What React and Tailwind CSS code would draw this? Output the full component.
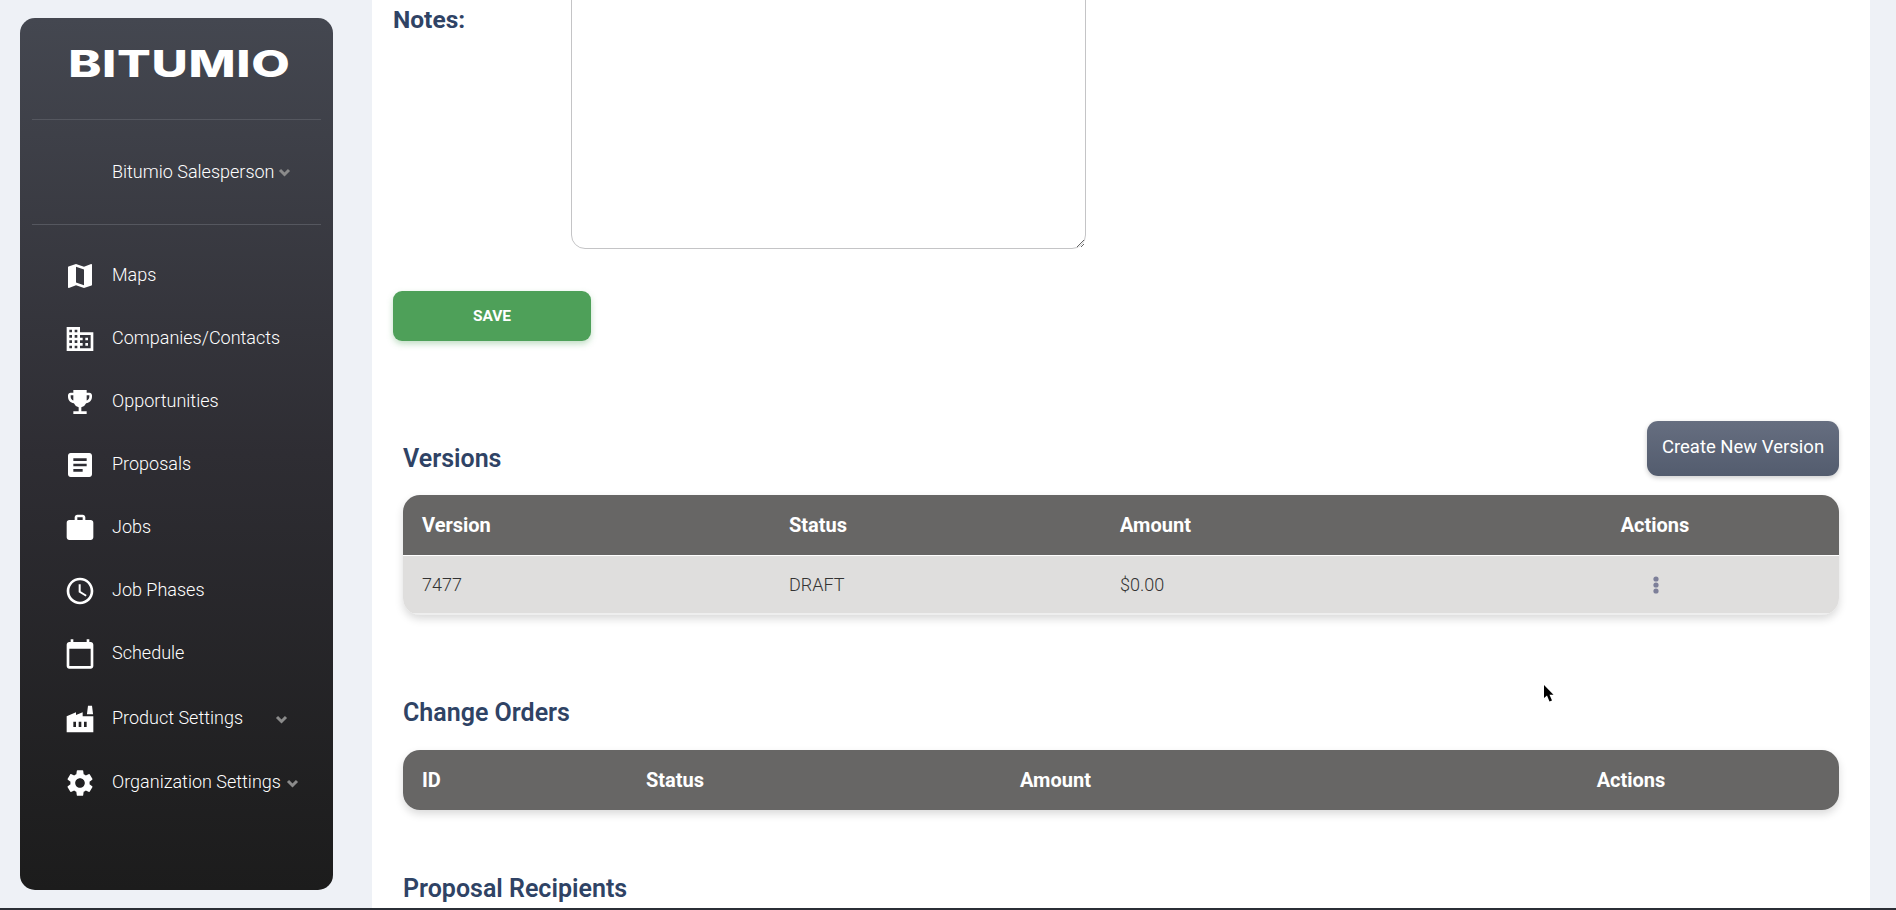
import React from 'react';
import { MdMap, MdBusiness, MdEmojiEvents, MdArticle, MdWork, MdAccessTime, MdCalendarToday, MdFactory, MdSettings } from 'react-icons/md';

const navItems = [
  { label: 'Maps', icon: MdMap },
  { label: 'Companies/Contacts', icon: MdBusiness },
  { label: 'Opportunities', icon: MdEmojiEvents },
  { label: 'Proposals', icon: MdArticle },
  { label: 'Jobs', icon: MdWork },
  { label: 'Job Phases', icon: MdAccessTime },
  { label: 'Schedule', icon: MdCalendarToday },
  { label: 'Product Settings', icon: MdFactory, chevron: 'ml-[32px]', gapTop: 'mt-[2px]' },
  { label: 'Organization Settings', icon: MdSettings, chevron: 'ml-[5px]', gapTop: 'mt-[1px]' },
];

const Chevron = ({ className = '' }) => (
  <svg width="13" height="9" viewBox="0 0 13 9" fill="none" className={className}>
    <path d="M2 2 L6.5 6.5 L11 2" stroke="#8b8b8b" strokeWidth="3" />
  </svg>
);

const Sidebar = () => (
  <aside className="w-[313px] h-[872px] shrink-0 rounded-[15px] bg-gradient-to-b from-[#444750] via-[#2e2d33] to-[#1c1c1c] px-[12px]">
    <div className="h-[101px] flex items-start justify-center pt-[24px] pl-[6px]">
      <span className="font-['Inter',sans-serif] font-extrabold text-[37px] leading-[44px] text-white tracking-[0.5px] scale-x-[1.35] origin-center">
        BITUMIO
      </span>
    </div>
    <div className="h-px bg-[#55575f]" />
    <div className="h-[104px] flex items-center pl-[80px] pb-[2px] font-['Roboto',sans-serif] font-light text-[18px] text-white">
      <span>Bitumio Salesperson</span>
      <Chevron className="ml-[3px] mt-[3px]" />
    </div>
    <div className="h-px bg-[#55575f]" />
    <nav className="pt-[19px] flex flex-col">
      {navItems.map((item) => (
        <div key={item.label} className={`h-[63px] flex items-center ${item.gapTop || ''}`}>
          <item.icon size={32} className="text-white ml-[32px] mr-[16px] shrink-0" />
          <span className="font-['Roboto',sans-serif] font-light text-[18px] leading-[24px] -mt-[2px] text-white">{item.label}</span>
          {item.chevron && <Chevron className={`${item.chevron} mt-[2px]`} />}
        </div>
      ))}
    </nav>
  </aside>
);

const SectionTitle = ({ children }) => (
  <h2 className="font-['Roboto',sans-serif] font-semibold text-[25px] leading-[30px] text-[#2f4365]">{children}</h2>
);

const HeaderRow = ({ columns, cells }) => (
  <div className={`grid ${columns} h-[60px] items-center bg-[#676665] font-['Roboto',sans-serif] font-bold text-[20px] text-white`}>
    {cells.map((cell, i) => (
      <div key={cell} className={i === cells.length - 1 ? 'text-center' : 'pl-[19px]'}>{cell}</div>
    ))}
  </div>
);

const Main = () => (
  <main className="w-[1498px] h-[908px] shrink-0 bg-white pl-[21px] pr-[31px] overflow-hidden">
    <div className="flex items-start">
      <div className="w-[178px] pt-[5px] font-['Roboto',sans-serif] font-bold text-[24.5px] leading-[30px] text-[#2f4365]">Notes:</div>
      <textarea className="w-[515px] h-[269px] -mt-[20px] rounded-[14px] border border-[#c4c4c6] bg-white" />
    </div>

    <button className="block mt-[42px] w-[198px] h-[50px] pt-[1px] rounded-[9px] bg-[#4ea059] shadow-[0_3px_6px_rgba(76,160,89,0.35)] font-['Roboto',sans-serif] font-bold text-[15.5px] text-white">
      SAVE
    </button>

    <div className="ml-[10px] mt-[80px]">
      <div className="flex items-start justify-between">
        <div className="pt-[23px]">
          <SectionTitle>Versions</SectionTitle>
        </div>
        <button className="w-[192px] h-[55px] rounded-[11px] bg-gradient-to-b from-[#666e80] to-[#535c6e] shadow-[0_2px_5px_rgba(0,0,0,0.2)] font-['Roboto',sans-serif] text-[18.5px] text-white pb-[1px]">
          Create New Version
        </button>
      </div>

      <div className="mt-[19px] rounded-[17px] overflow-hidden shadow-[0_4px_8px_rgba(0,0,0,0.15)]">
        <HeaderRow columns="grid-cols-[367px_331px_370px_368px]" cells={['Version', 'Status', 'Amount', 'Actions']} />
        <div className="grid grid-cols-[367px_331px_370px_368px] h-[60px] items-center border-t border-white border-b-2 border-b-[#eeeeee] bg-[#dfdedd] font-['Roboto',sans-serif] font-light text-[18px] text-[#333333]">
          <div className="pl-[19px]">7477</div>
          <div className="pl-[19px]">DRAFT</div>
          <div className="pl-[19px]">$0.00</div>
          <div className="flex justify-center pl-[1px]">
            <svg width="6" height="18" viewBox="0 0 6 18" fill="#7d7f99">
              <circle cx="3" cy="3" r="2.6" />
              <circle cx="3" cy="9" r="2.6" />
              <circle cx="3" cy="15" r="2.6" />
            </svg>
          </div>
        </div>
      </div>

      <div className="mt-[83px]">
        <SectionTitle>Change Orders</SectionTitle>
      </div>

      <div className="mt-[22px] rounded-[17px] overflow-hidden shadow-[0_4px_8px_rgba(0,0,0,0.15)]">
        <HeaderRow columns="grid-cols-[224px_374px_422px_416px]" cells={['ID', 'Status', 'Amount', 'Actions']} />
      </div>

      <div className="mt-[64px]">
        <SectionTitle>Proposal Recipients</SectionTitle>
      </div>
    </div>
  </main>
);

const App = () => (
  <div className="relative w-[1896px] h-[910px] overflow-hidden bg-[#eef1f6]">
    <div className="flex h-[908px] pl-[20px]">
      <div className="pt-[18px] w-[352px] shrink-0">
        <Sidebar />
      </div>
      <Main />
    </div>
    <div className="h-[2px] bg-[#2b2f36]" />
    <svg className="absolute left-[1543px] top-[685px]" width="13" height="18" viewBox="0 0 13 18">
      <path d="M1 0 L1 13 L4 10.5 L6.5 16.5 L9 15.5 L6.5 9.8 L10.5 9.8 Z" fill="#000" />
    </svg>
  </div>
);

export default App;
